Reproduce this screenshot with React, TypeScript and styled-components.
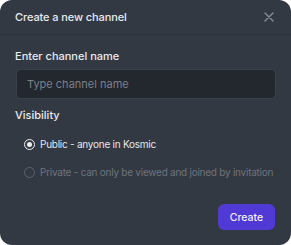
import { FC, useState } from "react";
import styled, { createGlobalStyle } from "styled-components";

const GlobalStyle = createGlobalStyle`
  html, body {
    margin: 0;
    padding: 0;
    background: #ffffff;
  }
  * {
    box-sizing: border-box;
  }
`;

const Dialog = styled.div`
  width: 291px;
  height: 245px;
  background: #333943;
  border-radius: 12px;
  font-family: Inter, "Liberation Sans", sans-serif;
  display: flex;
  flex-direction: column;
  overflow: hidden;
`;

const Header = styled.div`
  height: 35px;
  display: flex;
  align-items: center;
  padding: 0 15px;
  border-bottom: 1px solid #2b3039;
`;

const Title = styled.div`
  color: #e8eaee;
  font-size: 11px;
  font-weight: 500;
  letter-spacing: -0.1px;
  flex: 1;
`;

const CloseButton = styled.button`
  background: none;
  border: 0;
  padding: 0;
  width: 12px;
  height: 12px;
  display: flex;
  align-items: center;
  justify-content: center;
  cursor: pointer;
  margin-right: 1px;
`;

const Body = styled.div`
  flex: 1;
  padding: 14px 16px 15px 15px;
  display: flex;
  flex-direction: column;
`;

const Label = styled.div`
  color: #e8eaee;
  font-size: 11px;
  font-weight: 500;
  margin-bottom: 6px;
`;

const Input = styled.input`
  height: 30px;
  width: 100%;
  margin-left: 1px;
  background: #23272e;
  border: 1px solid #3b414b;
  border-radius: 5px;
  padding: 0 10px;
  color: #e8eaee;
  font-family: inherit;
  font-size: 11px;
  outline: none;

  &::placeholder {
    color: #7a808a;
  }
`;

const Section = styled.div`
  margin-top: 9px;
`;

const RadioList = styled.div`
  display: flex;
  flex-direction: column;
  gap: 15px;
  padding: 10px 0 0 9px;
`;

const RadioRow = styled.label<{ $muted?: boolean }>`
  display: flex;
  align-items: center;
  gap: 5px;
  font-size: 10px;
  line-height: 13px;
  letter-spacing: -0.25px;
  color: ${(p) => (p.$muted ? "#6d737d" : "#e3e6ea")};
  cursor: pointer;
  white-space: nowrap;
`;

const RadioCircle = styled.span<{ $checked?: boolean; $muted?: boolean }>`
  flex-shrink: 0;
  width: 11px;
  height: 11px;
  border-radius: 50%;
  border: 1.5px solid ${(p) => (p.$muted ? "#5f6570" : "#eef0f3")};
  display: flex;
  align-items: center;
  justify-content: center;

  &::after {
    content: "";
    width: 5px;
    height: 5px;
    border-radius: 50%;
    background: #eef0f3;
    display: ${(p) => (p.$checked ? "block" : "none")};
  }
`;

const Footer = styled.div`
  margin-top: auto;
  display: flex;
  justify-content: flex-end;
`;

const CreateButton = styled.button`
  width: 57px;
  height: 26px;
  border: 0;
  border-radius: 6px;
  background: #5039d5;
  color: #f2f0ff;
  font-family: inherit;
  font-size: 10.5px;
  font-weight: 500;
  cursor: pointer;
`;

const App: FC = () => {
  const [visibility, setVisibility] = useState("public");

  return (
    <>
      <GlobalStyle />
      <Dialog>
        <Header>
          <Title>Create a new channel</Title>
          <CloseButton aria-label="Close">
            <svg width="10" height="10" viewBox="0 0 10 10">
              <path d="M1 1 L9 9 M9 1 L1 9" stroke="#8a9099" strokeWidth="1.3" strokeLinecap="round" />
            </svg>
          </CloseButton>
        </Header>
        <Body>
          <Label>Enter channel name</Label>
          <Input placeholder="Type channel name" />
          <Section>
            <Label>Visibility</Label>
            <RadioList>
              <RadioRow onClick={() => setVisibility("public")}>
                <RadioCircle $checked={visibility === "public"} />
                Public - anyone in Kosmic
              </RadioRow>
              <RadioRow $muted onClick={() => setVisibility("private")}>
                <RadioCircle $muted $checked={visibility === "private"} />
                Private - can only be viewed and joined by invitation
              </RadioRow>
            </RadioList>
          </Section>
          <Footer>
            <CreateButton>Create</CreateButton>
          </Footer>
        </Body>
      </Dialog>
    </>
  );
};

export default App;
